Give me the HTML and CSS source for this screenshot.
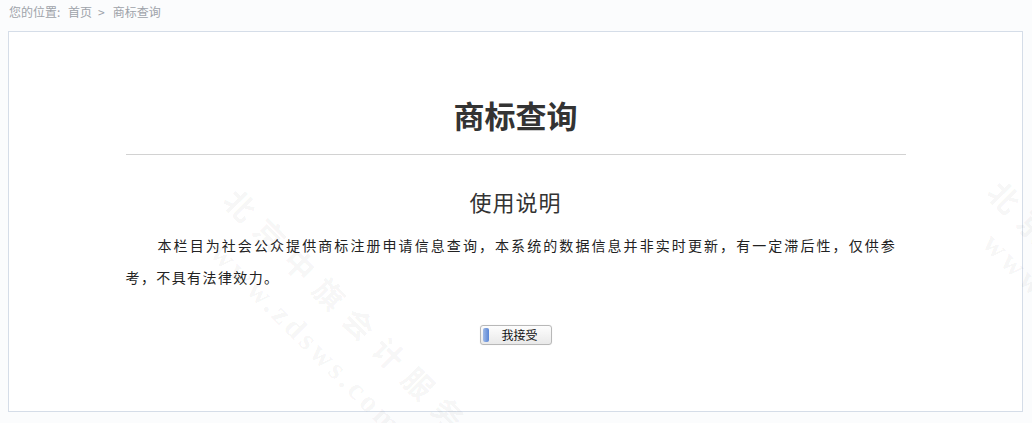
FILE: index.html
```html
<!DOCTYPE html>
<html lang="zh-CN">
<head>
    <meta charset="UTF-8">
    <meta name="viewport" content="width=device-width, initial-scale=1.0">
    <title>商标查询</title>
    <link rel="stylesheet" href="styles.css">
</head>
<body>
    <div class="page">
        <div class="crumbs">您的位置: <a href="#">首页</a><span class="sep">&gt;</span><span>商标查询</span></div>
        <div class="box">
            <div class="content">
                <h1 class="title">商标查询</h1>
                <h2 class="subtitle">使用说明</h2>
                <div class="intro">
                    <div class="intro-first">本栏目为社会公众提供商标注册申请信息查询，本系统的数据信息并非实时更新，有一定滞后性，仅供参</div>
                    <div>考，不具有法律效力。</div>
                </div>
                <div class="actions">
                    <button class="btn-accept" type="button"><span class="btn-cap"></span>我接受</button>
                </div>
            </div>
        </div>
        <!-- faint site watermark over the page -->
        <div class="watermark">
            <span class="wm wm-name" style="left: 246px; top: 178px;">北京中旗会计服务</span>
            <span class="wm wm-url" style="left: 228px; top: 236px;">www.zdsws.com</span>
            <span class="wm wm-name" style="left: 1010px; top: 170px;">北京中旗会计服务</span>
            <span class="wm wm-url" style="left: 1000px; top: 226px;">www.zdsws.com</span>
        </div>
    </div>
</body>
</html>
```

FILE: styles.css
```css
html, body {
    margin: 0;
    padding: 0;
    background-color: #fbfcfd;
}
body {
    font-family: "Noto Sans CJK SC", "Liberation Sans", sans-serif;
    color: #333;
}
.page {
    position: relative;
    padding: 0 9px 0 8px;
    height: 423px;
    overflow: hidden;
}
.crumbs {
    height: 24px;
    line-height: 24px;
    margin-bottom: 7px;
    padding-left: 1px;
    font-size: 12px;
    color: #9ea3aa;
}
.crumbs a {
    color: #9ea3aa;
    text-decoration: none;
    margin-left: 5px;
}
.crumbs .sep {
    margin: 0 8px 0 6px;
}
.box {
    height: 379px;
    background-color: #fff;
    border: 1px solid #d5dde8;
}
.content {
    width: 780px;
    margin: 0 auto;
    padding-top: 63px;
}
.title {
    margin: 0;
    height: 40px;
    line-height: 40px;
    padding-bottom: 19px;
    border-bottom: 1px solid #d2d2d2;
    text-align: center;
    font-size: 31px;
    font-weight: bold;
    color: #333;
}
.subtitle {
    margin: 31px 0 0;
    line-height: 30px;
    text-align: center;
    font-size: 22px;
    font-weight: normal;
    letter-spacing: 1px;
    color: #333;
}
.intro {
    margin-top: 13px;
    padding-right: 10px;
    font-size: 14px;
    line-height: 32px;
    letter-spacing: 1.4px;
    color: #222;
}
.intro-first {
    text-indent: 32px;
    text-align: justify;
    text-align-last: justify;
    letter-spacing: 0.7px;
}
.actions {
    display: flex;
    justify-content: center;
    margin-top: 32px;
}
.btn-accept {
    position: relative;
    width: 72px;
    height: 20px;
    padding: 0 0 0 8px;
    font-family: "Noto Sans CJK SC", sans-serif;
    font-size: 12px;
    line-height: 18px;
    color: #111;
    border: 1px solid #b8b8b8;
    border-radius: 3px;
    background: linear-gradient(#fdfdfd, #e9e9e9);
    box-shadow: 0 0 1px #ddd;
    cursor: pointer;
}
.btn-cap {
    position: absolute;
    left: 2px;
    top: 2px;
    width: 6px;
    height: 14px;
    border-radius: 2px;
    background: linear-gradient(to right, #9fb9e6, #5a86d6);
}
.watermark {
    position: absolute;
    top: 0;
    left: 0;
    right: 0;
    bottom: 0;
    overflow: hidden;
    pointer-events: none;
}
.wm {
    position: absolute;
    transform-origin: left top;
    transform: rotate(45deg);
    white-space: nowrap;
    color: rgba(0, 0, 0, 0.05);
    font-family: "Liberation Serif", "Noto Sans CJK SC", serif;
    font-weight: bold;
}
.wm-name {
    font-size: 30px;
    letter-spacing: 12px;
}
.wm-url {
    font-size: 30px;
    letter-spacing: 4px;
}
```
